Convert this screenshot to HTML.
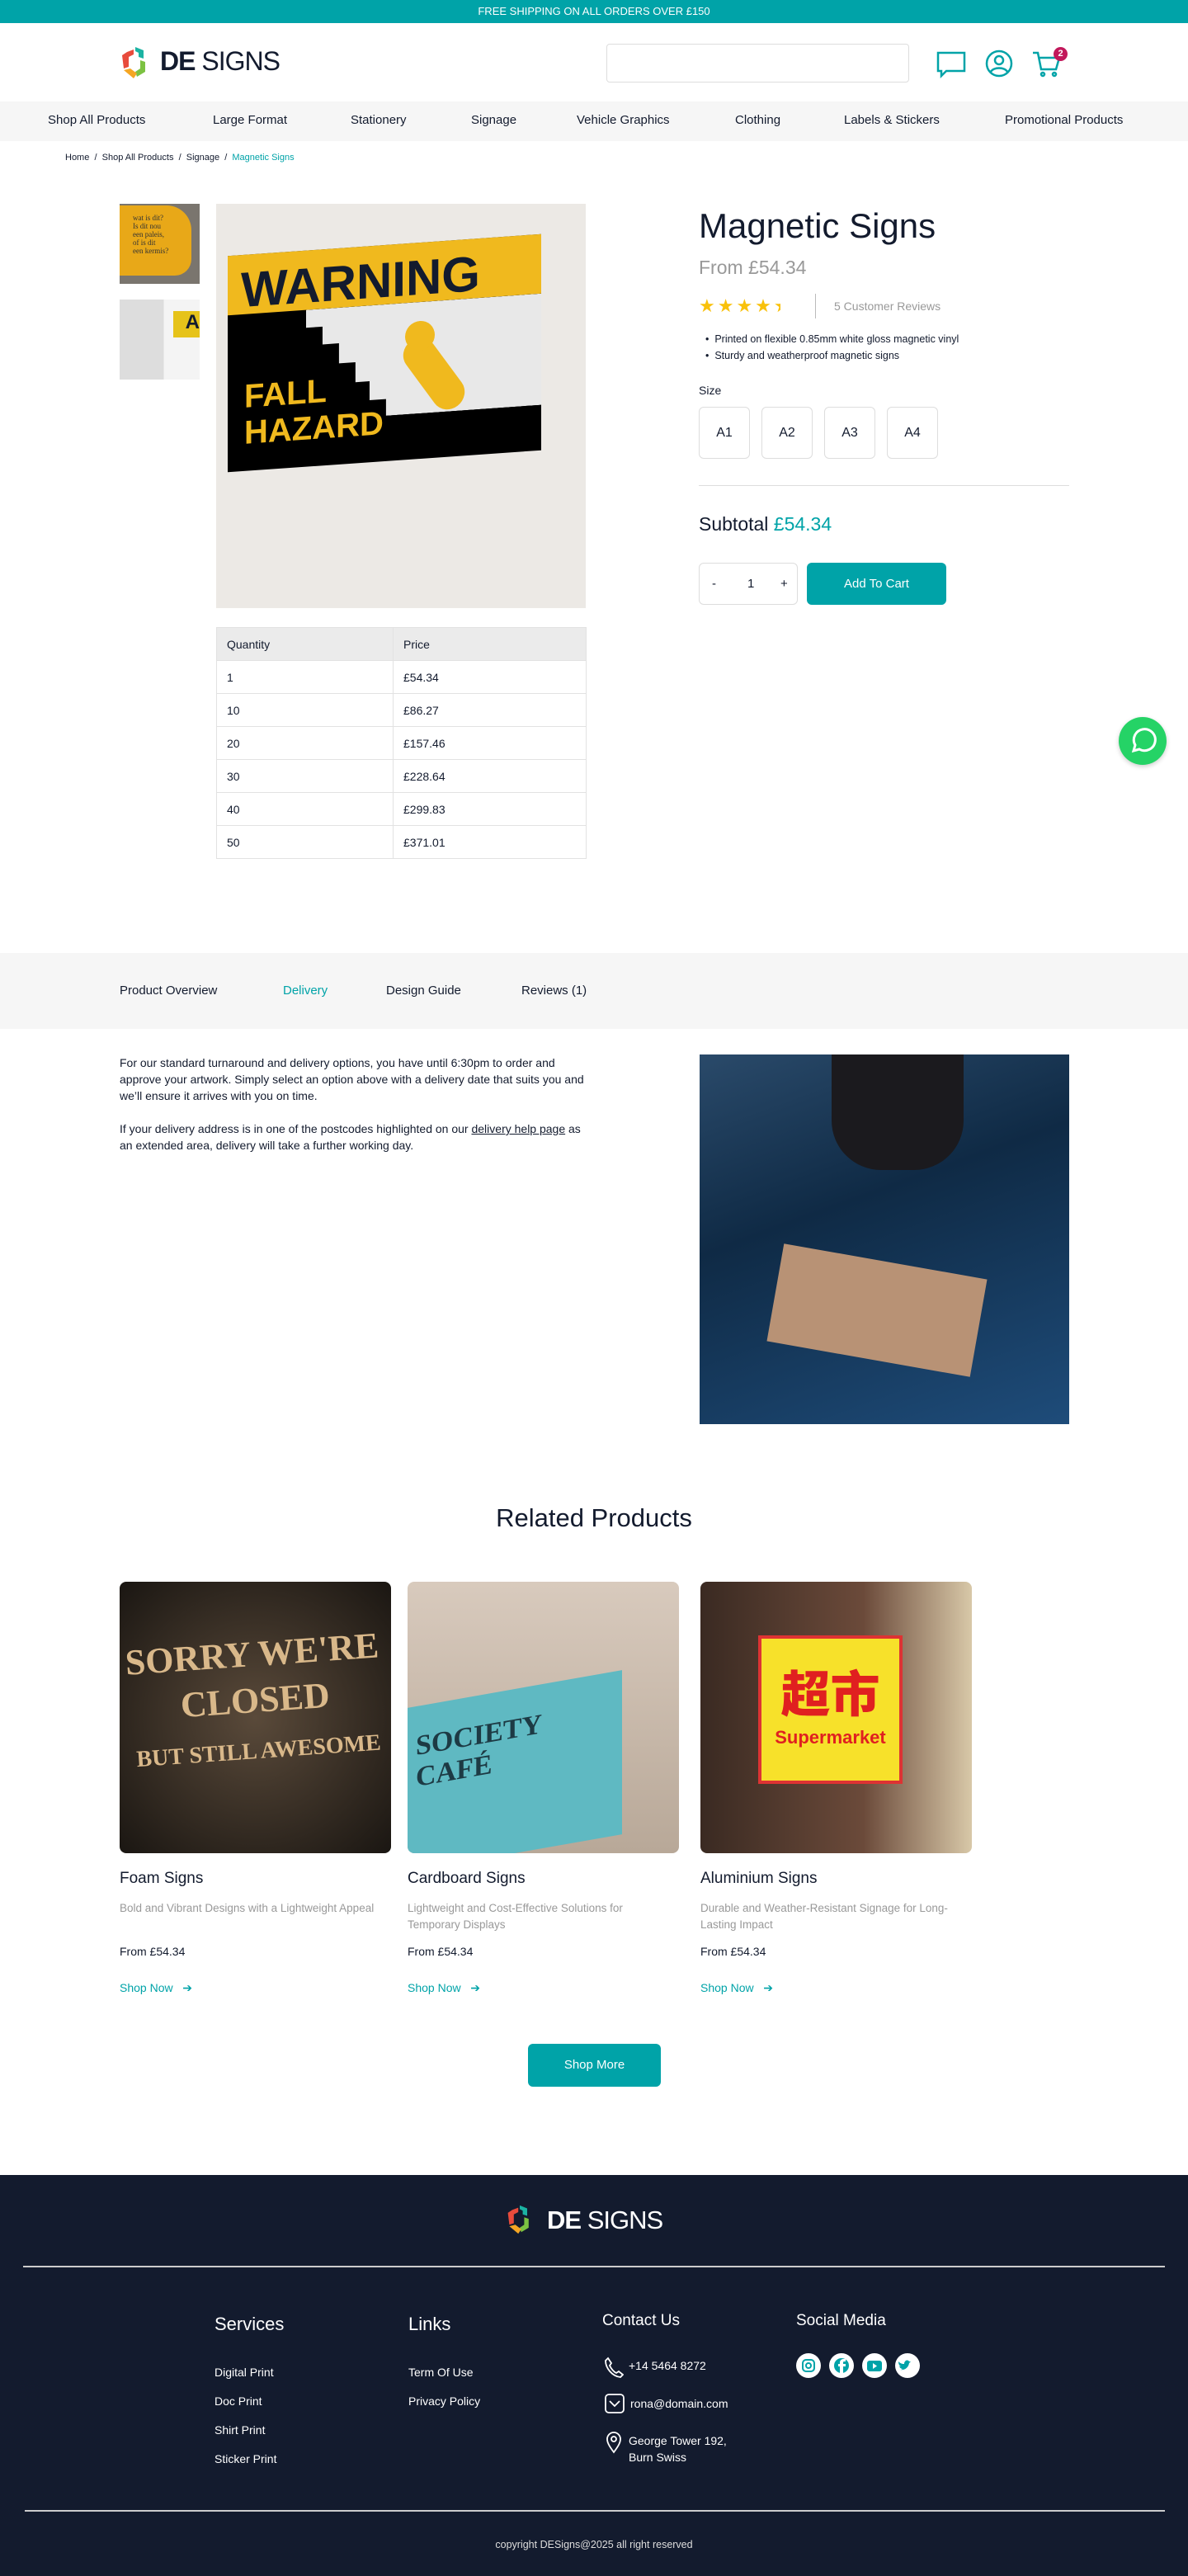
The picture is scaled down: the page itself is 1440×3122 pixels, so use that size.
<!DOCTYPE html>
<html><head><meta charset="utf-8"><style>
*{margin:0;padding:0;box-sizing:border-box}
body{width:1440px;height:3122px;position:relative;font-family:"Liberation Sans",sans-serif;color:#131b2e;background:#fff;overflow:hidden}
.a{position:absolute}
.t{color:#00a3a8}
.nav span{position:absolute;top:14px;font-size:15px}
table{border-collapse:collapse}
td{border:1px solid #e2e2e2;height:40px;padding-left:12px;font-size:14px}
.sz{position:absolute;top:493px;width:62px;height:63px;border:1px solid #ddd;border-radius:6px;text-align:center;line-height:61px;font-size:16px}
.card .tt{font-size:19px;position:absolute}
.fl{color:#fff;font-size:14px;position:absolute}
</style></head><body>
<div class="a" style="left:0;top:0;width:1440px;height:28px;background:#00a3a8;color:#fff;font-size:13px;text-align:center;line-height:28px">FREE SHIPPING ON ALL ORDERS OVER £150</div>
<svg class="a" style="left:144px;top:55px" width="40" height="42" viewBox="0 0 40 42"><path d="M20 2 L30 6 L30 16 L24 14 L24 9 L20 7Z" fill="#1bb3a3"/><path d="M10 8 L18 5 L18 11 L12 14 L12 26 L6 28 L4 12Z" fill="#e84b3c"/><path d="M26 18 L32 20 L32 32 L22 38 L20 32 L26 28Z" fill="#7cc242"/><path d="M6 30 L14 28 L22 34 L18 40 Z" fill="#f5a623"/></svg>
<div class="a" style="left:194px;top:56px;font-size:32px;letter-spacing:-1px"><b>DE</b> SIGNS</div>
<div class="a" style="left:735px;top:53px;width:367px;height:47px;border:1px solid #ddd;border-radius:4px"></div>
<svg class="a" style="left:1134px;top:61px" width="38" height="34" viewBox="0 0 38 34" fill="none" stroke="#00a3a8" stroke-width="2.5"><path d="M3 3h32v22H13l-6 6v-6H3z"/></svg>
<svg class="a" style="left:1194px;top:60px" width="34" height="34" viewBox="0 0 34 34" fill="none" stroke="#00a3a8" stroke-width="2.5"><circle cx="17" cy="17" r="15"/><circle cx="17" cy="13" r="5"/><path d="M7 27c3-6 17-6 20 0"/></svg>
<svg class="a" style="left:1250px;top:60px" width="36" height="34" viewBox="0 0 36 34" fill="none" stroke="#00a3a8" stroke-width="2.5"><path d="M2 4h6l4 20h18l4-14H10"/><circle cx="14" cy="30" r="2"/><circle cx="28" cy="30" r="2"/></svg>
<div class="a" style="left:1277px;top:57px;width:17px;height:17px;border-radius:50%;background:#c2185b;color:#fff;font-size:11px;text-align:center;line-height:17px;font-weight:bold">2</div>
<div class="a nav" style="left:0;top:123px;width:1440px;height:48px;background:#f6f6f6">
<span style="left:58px">Shop All Products</span><span style="left:258px">Large Format</span><span style="left:425px">Stationery</span><span style="left:571px">Signage</span><span style="left:699px">Vehicle Graphics</span><span style="left:891px">Clothing</span><span style="left:1023px">Labels &amp; Stickers</span><span style="left:1218px">Promotional Products</span></div>
<div class="a" style="left:79px;top:185px;font-size:11px">Home &nbsp;/&nbsp; Shop All Products &nbsp;/&nbsp; Signage &nbsp;/&nbsp; <span class="t">Magnetic Signs</span></div>
<div class="a" style="left:145px;top:247px;width:97px;height:97px;background:#7a756e;overflow:hidden"><div style="margin:2px 10px 8px 0;height:85px;background:#e8a818;border-radius:0 30px 20px 0;font:9px 'Liberation Serif';padding:10px 0 0 16px;line-height:10px;color:#333">wat is dit?<br>Is dit nou<br>een paleis,<br>of is dit<br>een kermis?</div></div>
<div class="a" style="left:145px;top:363px;width:97px;height:97px;background:linear-gradient(90deg,#ddd 0 55%,#f4f4f4 55%)"><div style="position:absolute;right:0;top:14px;width:32px;height:32px;background:#e6c31a;font-weight:bold;font-size:24px;text-align:right">A</div></div>
<div class="a" style="left:262px;top:247px;width:448px;height:490px;background:#ece9e5;overflow:hidden">
<div class="a" style="left:14px;top:50px;width:380px;height:262px;background:#000;transform:skewY(-4deg)">
<div style="height:72px;background:#f0b91e;font:900 60px 'Liberation Sans';padding:8px 0 0 16px">WARNING</div>
<div class="a" style="left:95px;top:72px;width:285px;height:135px;background:#e8e8e8;clip-path:polygon(0 0,100% 0,100% 100%,34% 100%,34% 85%,27% 85%,27% 68%,21% 68%,21% 50%,14% 50%,14% 32%,7% 32%,7% 16%,0 16%)"></div>
<div class="a" style="left:20px;top:150px;color:#f0b91e;font:900 40px 'Liberation Sans';line-height:44px">FALL<br>HAZARD</div>
<div class="a" style="left:230px;top:110px;width:40px;height:100px;background:#f0b91e;border-radius:20px;transform:rotate(-35deg)"></div>
<div class="a" style="left:215px;top:95px;width:36px;height:36px;background:#f0b91e;border-radius:50%"></div>
</div></div>
<table class="a" style="left:262px;top:760px;width:449px">
<tr style="background:#ebebeb"><td style="width:214px">Quantity</td><td>Price</td></tr>
<tr><td>1</td><td>£54.34</td></tr><tr><td>10</td><td>£86.27</td></tr><tr><td>20</td><td>£157.46</td></tr><tr><td>30</td><td>£228.64</td></tr><tr><td>40</td><td>£299.83</td></tr><tr><td>50</td><td>£371.01</td></tr></table>
<div class="a" style="left:847px;top:250px;font-size:42px">Magnetic Signs</div>
<div class="a" style="left:847px;top:311px;font-size:23px;color:#999">From £54.34</div>
<div class="a" style="left:847px;top:358px;font-size:22px;color:#f9c10b;letter-spacing:3px">★★★★<span style="display:inline-block;width:8px;overflow:hidden;vertical-align:bottom">★</span></div>
<div class="a" style="left:988px;top:356px;width:1px;height:30px;background:#bbb"></div>
<div class="a" style="left:1011px;top:363px;font-size:14px;color:#999">5 Customer Reviews</div>
<div class="a" style="left:855px;top:401px;font-size:12.5px;line-height:20px">•&nbsp; Printed on flexible 0.85mm white gloss magnetic vinyl<br>•&nbsp; Sturdy and weatherproof magnetic signs</div>
<div class="a" style="left:847px;top:465px;font-size:14px">Size</div>
<div class="sz" style="left:847px">A1</div><div class="sz" style="left:923px">A2</div><div class="sz" style="left:999px">A3</div><div class="sz" style="left:1075px">A4</div>
<div class="a" style="left:847px;top:588px;width:449px;height:1px;background:#ddd"></div>
<div class="a" style="left:847px;top:622px;font-size:23px">Subtotal <span class="t">£54.34</span></div>
<div class="a" style="left:847px;top:682px;width:120px;height:51px;border:1px solid #ddd;border-radius:6px;font-size:15px;line-height:49px"><span style="position:absolute;left:15px">-</span><span style="position:absolute;left:58px">1</span><span style="position:absolute;left:98px">+</span></div>
<div class="a" style="left:978px;top:682px;width:169px;height:51px;background:#00a3a8;border-radius:6px;color:#fff;font-size:15px;text-align:center;line-height:51px">Add To Cart</div>
<div class="a" style="left:1356px;top:869px;width:58px;height:58px;border-radius:50%;background:#25d366;box-shadow:0 2px 6px rgba(0,0,0,.2)"><svg width="58" height="58" viewBox="0 0 58 58" fill="none" stroke="#fff" stroke-width="3"><path d="M18 41l2-7a13 13 0 1 1 5 5z"/></svg></div>
<div class="a" style="left:0;top:1155px;width:1440px;height:92px;background:#f6f6f6;font-size:15px">
<span class="a" style="left:145px;top:37px">Product Overview</span><span class="a t" style="left:343px;top:37px">Delivery</span><span class="a" style="left:468px;top:37px">Design Guide</span><span class="a" style="left:632px;top:37px">Reviews (1)</span></div>
<div class="a" style="left:145px;top:1278px;width:575px;font-size:14px;line-height:20px">For our standard turnaround and delivery options, you have until 6:30pm to order and approve your artwork. Simply select an option above with a delivery date that suits you and we’ll ensure it arrives with you on time.<br><br>If your delivery address is in one of the postcodes highlighted on our <u>delivery help page</u> as an extended area, delivery will take a further working day.</div>
<div class="a" style="left:848px;top:1278px;width:448px;height:448px;background:linear-gradient(160deg,#2a4a6a,#0f2a45 40%,#1e4c7a);overflow:hidden">
<div class="a" style="left:90px;top:250px;width:250px;height:120px;background:#b89275;transform:rotate(10deg)"></div>
<div class="a" style="left:160px;top:0;width:160px;height:140px;background:#1b1a1e;border-radius:0 0 60px 60px"></div></div>
<div class="a" style="left:0;top:1822px;width:1440px;text-align:center;font-size:31px">Related Products</div>
<div class="a" style="left:145px;top:1917px;width:329px;height:329px;border-radius:8px;background:radial-gradient(#5a4a3a,#1a1612);overflow:hidden"><div style="margin:60px 10px;color:#d9b88a;font:900 44px 'Liberation Serif';text-align:center;line-height:56px;transform:rotate(-4deg)">SORRY WE'RE<br>CLOSED<br><span style="font-size:28px">BUT STILL AWESOME</span></div></div>
<div class="a" style="left:494px;top:1917px;width:329px;height:329px;border-radius:8px;background:linear-gradient(#d8cabd,#b8a898);overflow:hidden"><div class="a" style="left:0;top:130px;width:260px;height:199px;background:#5fb9c2;transform:skewY(-10deg)"><div style="color:#1d3a44;font:900 34px 'Liberation Serif';padding:30px 10px">SOCIETY CAFÉ</div></div></div>
<div class="a" style="left:849px;top:1917px;width:329px;height:329px;border-radius:8px;background:linear-gradient(90deg,#3a2a22,#6b4a3a 60%,#d8c8a8);overflow:hidden"><div class="a" style="left:70px;top:65px;width:175px;height:180px;background:#f7e12a;border:4px solid #d33;text-align:center;color:#e02020"><div style="font:900 60px 'Noto Sans CJK SC',sans-serif;margin-top:20px">超市</div><div style="font-size:22px;font-weight:bold">Supermarket</div></div></div>
<div class="card">
<div class="tt" style="left:145px;top:2266px">Foam Signs</div><div class="tt" style="left:494px;top:2266px">Cardboard Signs</div><div class="tt" style="left:849px;top:2266px">Aluminium Signs</div>
<div class="a" style="left:145px;top:2303px;width:325px;font-size:13.5px;color:#999;line-height:20px">Bold and Vibrant Designs with a Lightweight Appeal</div>
<div class="a" style="left:494px;top:2303px;width:325px;font-size:13.5px;color:#999;line-height:20px">Lightweight and Cost-Effective Solutions for Temporary Displays</div>
<div class="a" style="left:849px;top:2303px;width:325px;font-size:13.5px;color:#999;line-height:20px">Durable and Weather-Resistant Signage for Long-Lasting Impact</div>
<div class="a" style="left:145px;top:2357px;font-size:14px">From £54.34</div><div class="a" style="left:494px;top:2357px;font-size:14px">From £54.34</div><div class="a" style="left:849px;top:2357px;font-size:14px">From £54.34</div>
<div class="a t" style="left:145px;top:2401px;font-size:14px">Shop Now &nbsp; ➔</div><div class="a t" style="left:494px;top:2401px;font-size:14px">Shop Now &nbsp; ➔</div><div class="a t" style="left:849px;top:2401px;font-size:14px">Shop Now &nbsp; ➔</div>
</div>
<div class="a" style="left:640px;top:2477px;width:161px;height:52px;background:#00a3a8;border-radius:6px;color:#fff;text-align:center;line-height:52px;font-size:15px">Shop More</div>
<div class="a" style="left:0;top:2636px;width:1440px;height:486px;background:#131b2e">
<svg class="a" style="left:612px;top:34px" width="36" height="40" viewBox="0 0 40 42"><path d="M20 2 L30 6 L30 16 L24 14 L24 9 L20 7Z" fill="#1bb3a3"/><path d="M10 8 L18 5 L18 11 L12 14 L12 26 L6 28 L4 12Z" fill="#e84b3c"/><path d="M26 18 L32 20 L32 32 L22 38 L20 32 L26 28Z" fill="#7cc242"/><path d="M6 30 L14 28 L22 34 L18 40 Z" fill="#f5a623"/></svg>
<div class="a" style="left:663px;top:37px;color:#fff;font-size:31px;letter-spacing:-1px"><b>DE</b> SIGNS</div>
<div class="a" style="left:28px;top:110px;width:1384px;height:2px;background:#ccc"></div>
<div class="fl" style="left:260px;top:168px;font-size:22px">Services</div><div class="fl" style="left:495px;top:168px;font-size:22px">Links</div><div class="fl" style="left:730px;top:166px;font-size:19px">Contact Us</div><div class="fl" style="left:965px;top:166px;font-size:19px">Social Media</div>
<div class="fl" style="left:260px;top:222px;line-height:35px">Digital Print<br>Doc Print<br>Shirt Print<br>Sticker Print</div>
<div class="fl" style="left:495px;top:222px;line-height:35px">Term Of Use<br>Privacy Policy</div>
<svg class="a" style="left:732px;top:220px" width="24" height="26" viewBox="0 0 24 26" fill="none" stroke="#fff" stroke-width="1.8"><path d="M5 2l4 6-2 3c2 4 4 7 8 9l3-2 5 4-3 3C10 24 2 14 2 5z"/></svg>
<div class="fl" style="left:762px;top:223px">+14 5464 8272</div>
<svg class="a" style="left:732px;top:264px" width="26" height="26" viewBox="0 0 26 26" fill="none" stroke="#fff" stroke-width="1.8"><rect x="2" y="2" width="22" height="22" rx="4"/><path d="M7 10l6 6 6-6"/></svg>
<div class="fl" style="left:764px;top:269px">rona@domain.com</div>
<svg class="a" style="left:734px;top:310px" width="20" height="28" viewBox="0 0 20 28" fill="none" stroke="#fff" stroke-width="1.8"><path d="M10 26C4 18 2 14 2 10a8 8 0 0 1 16 0c0 4-2 8-8 16z"/><circle cx="10" cy="10" r="3"/></svg>
<div class="fl" style="left:762px;top:312px;line-height:20px">George Tower 192,<br>Burn Swiss</div>
<div class="a" style="left:965px;top:216px">
<svg width="160" height="30" viewBox="0 0 160 30"><g fill="#fff"><circle cx="15" cy="15" r="15"/><circle cx="55" cy="15" r="15"/><circle cx="95" cy="15" r="15"/><circle cx="135" cy="15" r="15"/></g><rect x="8" y="8" width="14" height="14" rx="4" fill="none" stroke="#00a3a8" stroke-width="2"/><circle cx="15" cy="15" r="3" fill="none" stroke="#00a3a8" stroke-width="2"/><circle cx="55" cy="15" r="9" fill="#00a3a8"/><path d="M57 24v-8h3v-3h-3v-2c0-1 1-1 2-1h1V7h-3c-2 0-4 2-4 4v2h-2v3h2v8z" fill="#fff"/><rect x="86" y="9" width="18" height="13" rx="3" fill="#00a3a8"/><path d="M93 12l5 3.5-5 3.5z" fill="#fff"/><path d="M126 20c5 1 10-2 11-8l2-2-2 0c-1-2-4-2-5 0-1 1-1 2-1 3-3 0-5-1-7-3 0 3 1 5 3 6-1 0-2 0-2-1 0 2 2 4 4 4-1 1-2 1-3 1z" fill="#00a3a8"/></svg></div>
<div class="a" style="left:30px;top:406px;width:1382px;height:2px;background:#ccc"></div>
<div class="a" style="left:0;top:441px;width:1440px;text-align:center;color:#ddd;font-size:12.5px">copyright DESigns@2025 all right reserved</div>
</div>
</body></html>
